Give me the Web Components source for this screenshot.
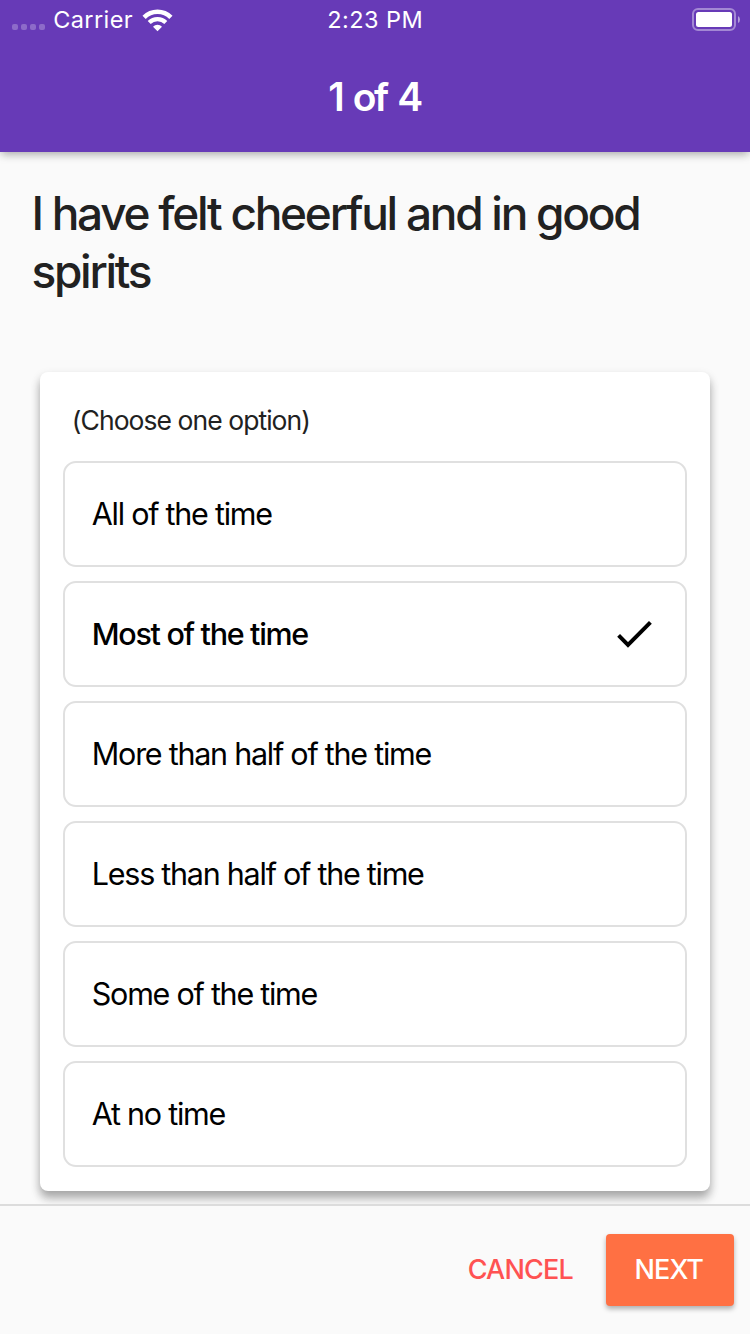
<!DOCTYPE html>
<html lang="en">
<head>
<meta charset="utf-8">
<title>Survey</title>
<style>
html,body{margin:0;height:100%}
body{font-family:Inter,"Liberation Sans",sans-serif;background:#fafafa;overflow:hidden}
</style>
</head>
<body>
<survey-screen></survey-screen>
<script>
const define = (name, html) => {
  const template = document.createElement('template');
  template.innerHTML = html;
  customElements.define(name, class extends HTMLElement {
    constructor() {
      super();
      this.attachShadow({mode: 'open'}).append(template.content.cloneNode(true));
    }
  });
};

define('status-bar', `
<style>
:host{display:grid;grid-template-columns:1fr auto 1fr;align-items:center;height:40px;padding:0 9px 0 12px;box-sizing:border-box;color:#fff;font-size:23.5px;line-height:40px}
.left{display:flex;align-items:center}
.dots{display:flex;gap:3px;margin-top:14px;margin-right:8.2px}
.dots i{width:6px;height:6px;border-radius:2px;background:rgba(255,255,255,.25)}
.carrier{letter-spacing:.4px}
.wifi{margin-left:9px}
.time{letter-spacing:.45px;margin:0 1.4px 0 -1.4px}
.battery{justify-self:end}
svg{display:block}
</style>
<div class="left">
  <div class="dots"><i></i><i></i><i></i><i></i></div>
  <span class="carrier">Carrier</span>
  <svg class="wifi" width="32" height="24" viewBox="142 8 32 24" fill="none" stroke="#fff">
    <path d="M144.1 17.3A19 19 0 0 1 170.9 17.3" stroke-width="4.6"/>
    <path d="M149.2 22.6A11.8 11.8 0 0 1 165.8 22.6" stroke-width="4.2"/>
    <path d="M157.5 31.2L153 26.7A6.2 6.2 0 0 1 162 26.7Z" fill="#fff" stroke="none"/>
  </svg>
</div>
<span class="time">2:23 PM</span>
<svg class="battery" width="50" height="24" viewBox="691 8 50 24">
  <rect x="693" y="9" width="42" height="21" rx="5" fill="none" stroke="#fff" stroke-opacity=".4" stroke-width="2"/>
  <rect x="696" y="12" width="36" height="15" rx="2.5" fill="#fff"/>
  <path d="M738 16Q740 17 740 19.5T738 23Z" fill="#fff" fill-opacity=".5"/>
</svg>`);

define('app-header', `
<style>
:host{display:block;height:152px;background:#673ab7;color:#fff;position:relative;z-index:1;box-shadow:0 4px 8px -2px rgba(0,0,0,.2),0 2px 10px rgba(0,0,0,.17)}
h1{margin:0;height:112px;line-height:114px;text-align:center;font-size:39px;font-weight:600;letter-spacing:-2.4px;word-spacing:3px;text-indent:-1px}
</style>
<status-bar></status-bar>
<h1><slot></slot></h1>`);

define('question-title', `
<style>
:host{display:block;padding:32px 32px 0 31.4px;font-size:46px;font-weight:500;line-height:58px;letter-spacing:-2.26px;color:#212121}
</style>
<slot></slot>`);

define('option-item', `
<style>
:host{display:flex;align-items:center;justify-content:space-between;height:106px;box-sizing:border-box;padding:0 32px 0 26.8px;border:2px solid #e0e0e0;border-radius:13px;background:#fff;color:#000;font-size:30.5px;letter-spacing:-1.25px}
:host([selected]){font-weight:500;letter-spacing:-1.32px}
span{margin-top:-2px}
svg{display:none;margin-top:2px}
:host([selected]) svg{display:block}
</style>
<span><slot></slot></span>
<svg width="37" height="30" viewBox="616 620 37 30" fill="none" stroke="#000" stroke-width="4"><path d="M618.6 635.3L628 644.8L650.4 622.4"/></svg>`);

define('option-card', `
<style>
:host{display:flex;flex-direction:column;gap:14px;margin:0 40px;padding:23px;height:819px;box-sizing:border-box;background:#fff;border-radius:8px;box-shadow:0 8px 10px rgba(0,0,0,.22),0 4px 10px rgba(0,0,0,.17)}
.hint{height:52px;line-height:50px;padding-left:8.8px;font-size:26.5px;letter-spacing:-.95px;color:#212121}
</style>
<div class="hint"><slot name="hint"></slot></div>
<slot></slot>`);

define('action-button', `
<style>
:host{display:block}
button{display:block;width:128px;height:72px;padding:0 0 2px;border:0;border-radius:4px;background:none;font-family:inherit;font-size:27px;font-weight:500;letter-spacing:-.8px;text-indent:-1.4px;color:#ff5252}
:host([raised]) button{background:#ff7043;color:#fff;font-weight:550;letter-spacing:-.95px;text-indent:-2.4px;box-shadow:0 3px 5px rgba(0,0,0,.3)}
</style>
<button><slot></slot></button>`);

define('action-bar', `
<style>
:host{display:flex;justify-content:flex-end;align-items:flex-start;gap:21px;height:130px;box-sizing:border-box;padding:28px 16px 0;border-top:2px solid #dcdcdc;background:#fafafa;position:relative}
</style>
<slot></slot>`);

define('survey-screen', `
<style>
:host{display:flex;flex-direction:column;width:750px;height:1334px;background:#fafafa}
question-title{height:188px}
action-bar{margin-top:13px}
</style>
<app-header>1 of 4</app-header>
<question-title>I have felt cheerful and in good spirits</question-title>
<option-card>
  <span slot="hint">(Choose one option)</span>
  <option-item>All of the time</option-item>
  <option-item selected>Most of the time</option-item>
  <option-item>More than half of the time</option-item>
  <option-item>Less than half of the time</option-item>
  <option-item>Some of the time</option-item>
  <option-item>At no time</option-item>
</option-card>
<action-bar>
  <action-button>CANCEL</action-button>
  <action-button raised>NEXT</action-button>
</action-bar>`);
</script>
</body>
</html>
